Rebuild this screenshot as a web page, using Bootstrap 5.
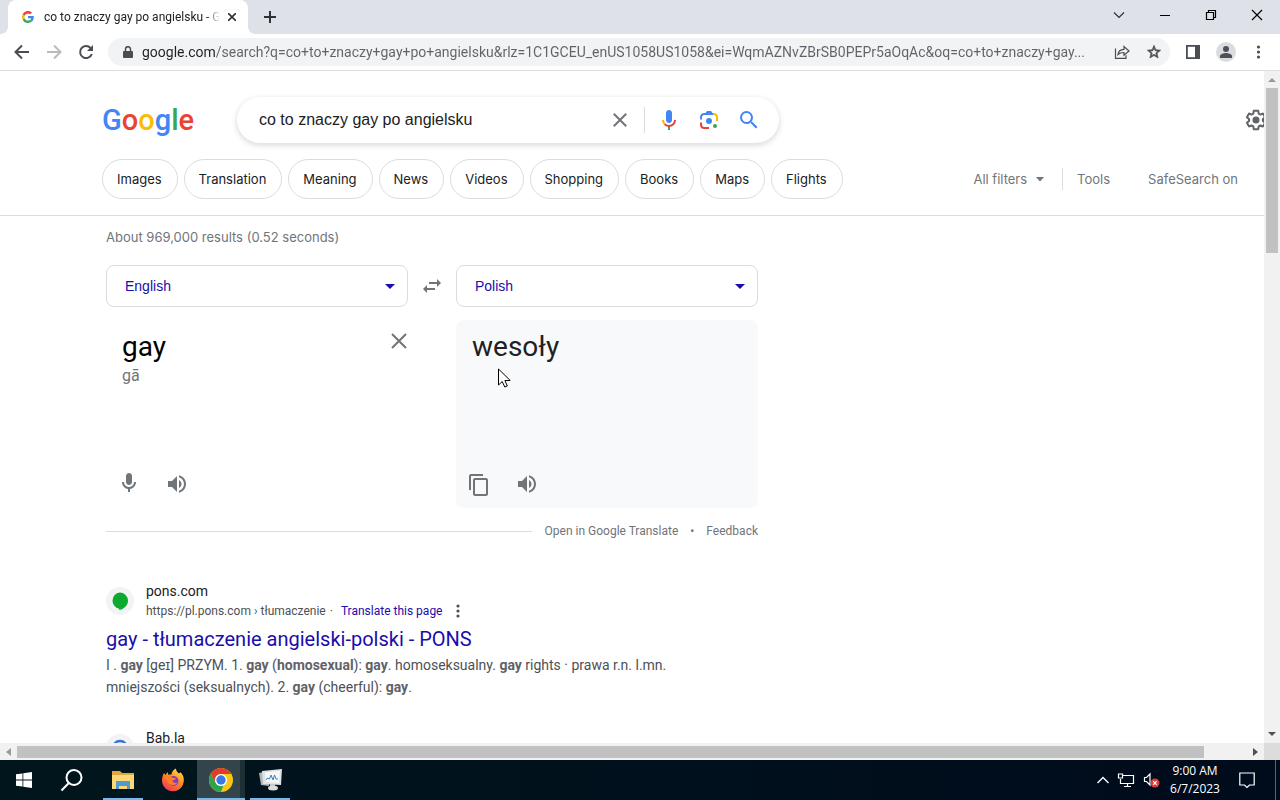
<!DOCTYPE html>
<html lang="en">
<head>
<meta charset="utf-8">
<meta name="viewport" content="width=device-width, initial-scale=1">
<title>co to znaczy gay po angielsku - Google Search</title>
<link href="https://cdn.jsdelivr.net/npm/bootstrap@5.3.0/dist/css/bootstrap.min.css" rel="stylesheet">
<style>
  body { height: 100vh; font-family: Roboto, sans-serif; font-size: 14px; line-height: 20px; color: #202124; background: #fff; }
  svg { display: block; flex: none; }
  a { text-decoration: none; color: #1a0dab; }
  button { border: 0; background: none; padding: 0; color: inherit; }

  /* browser frame */
  .tab-strip { height: 34px; background: #dee1e8; padding-left: 8px; }
  .browser-tab { width: 240px; background: #fff; border-radius: 8px 8px 0 0; padding: 0 12px 0 14px; position: relative; }
  .browser-tab::before, .browser-tab::after { content: ""; position: absolute; bottom: 0; width: 8px; height: 8px; }
  .browser-tab::before { left: -8px; background: radial-gradient(circle at 0 0, transparent 8px, #fff 8px); }
  .browser-tab::after { right: -8px; background: radial-gradient(circle at 100% 0, transparent 8px, #fff 8px); }
  .tab-title { font-size: 12px; margin: 0 8px 0 10px; -webkit-mask-image: linear-gradient(90deg, #000 92%, transparent); mask-image: linear-gradient(90deg, #000 92%, transparent); }
  .window-buttons { gap: 34px; padding-right: 17px; padding-bottom: 4px; }
  .toolbar { height: 37px; border-bottom: 1px solid #dcdde0; padding: 0 16px 0 14px; color: #4a4d51; }
  .nav-buttons { gap: 16px; margin-right: 14px; }
  .omnibox { height: 28px; border-radius: 14px; background: #f1f3f4; padding: 0 8px 0 10px; }
  .omnibox input { border: 0; outline: 0; padding: 0; font-size: 14px; color: transparent; background: linear-gradient(90deg, #202124 73px, #5f6368 73px); -webkit-background-clip: text; background-clip: text; text-overflow: ellipsis; }
  .avatar { width: 20px; height: 20px; background: #dadce0; }

  /* search header */
  .search-header { border-bottom: 1px solid #dadce0; padding-top: 26px; padding-bottom: 16px; }
  .header-row { padding-left: 102px; }
  .logo { font-size: 29px; line-height: 46px; font-weight: 500; width: 135px; }
  .c-blue { color: #4285f4; } .c-red { color: #ea4335; } .c-yellow { color: #fbbc05; } .c-green { color: #34a853; }
  .search-box { width: 542px; height: 46px; border-radius: 23px; box-shadow: 0 2px 5px 1px rgba(64,60,67,.16); padding: 0 18px 0 22px; }
  .search-box input { border: 0; outline: 0; padding: 0; font: 16px "Liberation Sans", sans-serif; color: #202124; }
  .search-box .rule { width: 1px; height: 26px; background: #dadce0; margin: 0 12px 0 12px; }
  .settings { margin-right: -4px; color: #5f6368; }
  .filters { gap: 6px; padding-top: 16px; padding-right: 26px; font-family: Inter, sans-serif; font-size: 13px; }
  .pill { height: 40px; border: 1px solid #dadce0; border-radius: 20px; padding: 0 15px 0 14px; color: #202124; display: flex; align-items: center; }
  .filters button, .filters .safe { color: #70757a; }
  .filters .rule { width: 1px; height: 22px; background: #dadce0; margin-left: 11px; }

  /* results */
  .results { padding: 0 0 0 106px; width: 758px; }
  .stats { font-family: Inter, sans-serif; font-size: 13px; color: #70757a; padding: 11px 0 18px; }
  .lang-select { height: 42px; width: 302px; border: 1px solid #dadce0; border-radius: 8px; padding: 0 18px; font: 14px "Liberation Sans", sans-serif; color: #1a0dab; background: #fff url("data:image/svg+xml,%3Csvg xmlns='http://www.w3.org/2000/svg' viewBox='0 0 10 5'%3E%3Cpath fill='%231a0dab' d='M0 0h10L5 5z'/%3E%3C/svg%3E") no-repeat right 12px center / 10px 5px; }
  .box { width: 302px; height: 188px; padding: 12px 16px; margin-top: 13px; }
  .box-out { background: #f8f9fa; border-radius: 8px; position: relative; }
  .word { font-size: 28px; line-height: 30px; }
  .clear-text { margin-right: -16px; }
  .phonetic { font-size: 16px; line-height: 28px; color: #70757a; }
  .box-actions { gap: 28px; color: #70757a; margin-left: -3px; }
  .cursor { position: absolute; left: 42px; top: 48px; }
  .links { font-size: 12px; line-height: 16px; margin-top: 15px; }
  .links a { color: #70757a; }
  .links .rule { height: 1px; background: #dadce0; margin-right: 13px; }
  .result { margin-top: 42px; }
  .favicon { width: 28px; height: 28px; background: #f1f3f4; border-radius: 50%; margin-right: 12px; }
  .crumb { font-size: 12px; color: #4d5156; }
  .result h3 { font-size: 20px; line-height: 26px; font-weight: 400; margin: 5px 0 2px; }
  .snippet { line-height: 22px; color: #4d5156; margin: 0; white-space: nowrap; }
  .snippet b { font-weight: 700; color: #5f6368; }
  .result-next { margin-top: 30px; }
  .site-next { padding-bottom: 20px; }

  /* scroll bars */
  .bar-v { width: 16px; background: #f1f1f1; }
  .bar-v .thumb { height: 165px; width: 12px; background: #c1c1c1; }
  .bar-h { height: 17px; background: #f1f1f1; flex: none; }
  .bar-h .track { padding-right: 43px; }
  .bar-h .thumb { height: 12px; background: #c1c1c1; }
  .corner { width: 16px; background: #dcdcdc; }
  .arrow-cell { width: 17px; }

  /* desktop task bar */
  .taskbar { height: 40px; background: linear-gradient(90deg, #00161c, #000b1c); color: #fff; flex: none; }
  .task { width: 48px; height: 40px; display: flex; align-items: center; justify-content: center; }
  .task-open { width: 40px; border-bottom: 2px solid #76b9ed; margin: 0 5px; padding-top: 2px; }
  .task-files { margin: 0 6px 0 7px; }
  .task-active { background: #33454b; border-bottom: 2px solid #76b9ed; padding-top: 2px; box-shadow: inset -5px 0 #1d3035; }
  .clock { font: 12px/18px "Open Sans", sans-serif; text-align: center; width: 60px; }
  .notify { margin: 0 20px 0 14px; }
  .show-desktop { width: 5px; border-left: 1px solid #59636c; }
</style>
</head>
<body class="d-flex flex-column overflow-hidden">

<header class="flex-shrink-0">
  <div class="tab-strip d-flex">
    <div class="browser-tab d-flex align-items-center">
      <svg width="12" height="12" viewBox="0 0 48 48"><path fill="#EA4335" d="M24 9.500c3.540 0 6.710 1.220 9.210 3.600l6.850-6.850C35.900 2.380 30.470 0 24 0 14.620 0 6.510 5.380 2.560 13.220l7.980 6.190C12.430 13.720 17.740 9.500 24 9.500z"/><path fill="#4285F4" d="M46.980 24.550c0-1.570-.15-3.090-.38-4.550H24v9.020h12.940c-.58 2.960-2.260 5.480-4.780 7.180l7.730 6c4.510-4.180 7.090-10.360 7.090-17.650z"/><path fill="#FBBC05" d="M10.530 28.590a14.500 14.500 0 0 1 0-9.180l-7.980-6.190a24 24 0 0 0 0 21.560z"/><path fill="#34A853" d="M24 48c6.480 0 11.930-2.130 15.890-5.810l-7.730-6c-2.150 1.450-4.920 2.300-8.160 2.300-6.260 0-11.570-4.220-13.470-9.910l-7.980 6.190C6.510 42.620 14.620 48 24 48z"/></svg>
      <div class="tab-title flex-grow-1 overflow-hidden text-nowrap">co to znaczy gay po angielsku - G</div>
      <button aria-label="Close tab"><svg width="8" height="8" viewBox="0 0 8 8" stroke="#303134" stroke-width="1.600"><path d="M0 0l8 8M8 0L0 8"/></svg></button>
    </div>
    <button class="ms-3 d-flex align-items-center" aria-label="New tab"><svg width="12" height="12" viewBox="0 0 12 12" stroke="#303134" stroke-width="2"><path d="M6 0v12M0 6h12"/></svg></button>
    <div class="window-buttons d-flex align-items-center ms-auto">
      <button aria-label="Search tabs"><svg width="12" height="12" viewBox="0 0 12 12" fill="none" stroke="#303134" stroke-width="1.200"><path d="M1 3.500l5 5 5-5"/></svg></button>
      <button aria-label="Minimize"><svg width="12" height="12" viewBox="0 0 12 12" stroke="#000"><path d="M1 6.500h10"/></svg></button>
      <button aria-label="Restore"><svg width="12" height="12" viewBox="0 0 12 12" fill="none" stroke="#000" stroke-width="1.200"><path d="M1.500 3.500h7v7h-7zM3.500 3.500v-2h7v7h-2"/></svg></button>
      <button aria-label="Close"><svg width="12" height="12" viewBox="0 0 12 12" stroke="#000" stroke-width="1.200"><path d="M1 1l10 10M11 1L1 11"/></svg></button>
    </div>
  </div>
  <div class="toolbar d-flex align-items-center">
    <div class="nav-buttons d-flex">
      <button aria-label="Back"><svg width="16" height="16" viewBox="0 0 16 16" fill="none" stroke="currentColor" stroke-width="2"><path d="M15 8H2M8 1.500L1.500 8 8 14.500"/></svg></button>
      <button aria-label="Forward"><svg width="16" height="16" viewBox="0 0 16 16" fill="none" stroke="#b9bbbe" stroke-width="2"><path d="M1 8h13M8 1.500L14.500 8 8 14.500"/></svg></button>
      <button aria-label="Reload"><svg width="16" height="16" viewBox="0 0 16 16" fill="none" stroke="currentColor" stroke-width="2"><path d="M13.800 10A6 6 0 1 1 12.500 4"/><path fill="currentColor" stroke="none" d="M15 1v6H9z"/></svg></button>
    </div>
    <div class="omnibox d-flex align-items-center flex-grow-1 me-3">
      <svg class="ms-1 me-2" width="12" height="13" viewBox="0 0 12 13"><path fill="#4a4d51" d="M2 5h8a1 1 0 0 1 1 1v5a1 1 0 0 1-1 1H2a1 1 0 0 1-1-1V6a1 1 0 0 1 1-1z"/><path fill="none" stroke="#4a4d51" stroke-width="1.500" d="M3.500 6V3.200a2.500 2.500 0 0 1 5 0V6"/></svg>
      <input class="flex-grow-1" type="text" aria-label="Address" value="google.com/search?q=co+to+znaczy+gay+po+angielsku&amp;rlz=1C1GCEU_enUS1058US1058&amp;ei=WqmAZNvZBrSB0PEPr5aOqAc&amp;oq=co+to+znaczy+gay...">
      <button class="ms-3" aria-label="Share"><svg width="16" height="16" viewBox="0 0 16 16" fill="none" stroke="currentColor" stroke-width="1.200"><path d="M1.500 4.500v9.800h10.500v-3M4 10.500c.4-3.500 2.500-5 6-5.200V2.500L15 7l-5 4.200V8.500c-2.800 0-4.500.5-6 2z"/></svg></button>
      <button class="ms-3" aria-label="Bookmark"><svg width="16" height="16" viewBox="0 0 24 24"><path fill="currentColor" d="M22 9.240l-7.190-.62L12 2 9.190 8.630 2 9.240l5.460 4.730L5.820 21 12 17.270 18.180 21l-1.630-7.030L22 9.240zM12 15.400l-3.760 2.270 1-4.280-3.320-2.880 4.380-.38L12 6.100l1.710 4.040 4.380.38-3.320 2.880 1 4.280L12 15.400z" stroke="currentColor"/></svg></button>
    </div>
    <button class="me-3" aria-label="Side panel"><svg width="14" height="14" viewBox="0 0 14 14"><path fill="none" stroke="currentColor" stroke-width="1.800" d="M.9.9h12.200v12.200H.9z"/><path fill="currentColor" d="M9 0h5v14H9z"/></svg></button>
    <button class="avatar rounded-circle d-flex align-items-center justify-content-center" aria-label="Profile"><svg width="14" height="14" viewBox="0 0 14 14" fill="#4a5157"><circle cx="7" cy="4" r="3"/><path d="M1 13v-2c0-2 4-3 6-3s6 1 6 3v2z"/></svg></button>
    <button class="ms-3" aria-label="Menu"><svg width="12" height="14" viewBox="0 0 12 14" fill="currentColor"><circle cx="6.500" cy="2" r="1.600"/><circle cx="6.500" cy="7" r="1.600"/><circle cx="6.500" cy="12" r="1.600"/></svg></button>
  </div>
</header>

<div class="d-flex flex-grow-1 overflow-hidden">
  <main class="flex-grow-1 overflow-hidden">
    <div class="search-header">
      <form class="header-row d-flex align-items-center" onsubmit="return false">
        <a class="logo flex-shrink-0" href="#" aria-label="Google"><span class="c-blue">G</span><span class="c-red">o</span><span class="c-yellow">o</span><span class="c-blue">g</span><span class="c-green">l</span><span class="c-red">e</span></a>
        <div class="search-box d-flex align-items-center">
          <input class="flex-grow-1" type="text" aria-label="Search" value="co to znaczy gay po angielsku">
          <button type="button" aria-label="Clear"><svg width="24" height="24" viewBox="0 0 24 24"><path fill="#70757a" d="M19 6.410L17.590 5 12 10.590 6.410 5 5 6.410 10.590 12 5 17.590 6.410 19 12 13.410 17.590 19 19 17.590 13.410 12z"/></svg></button>
          <span class="rule"></span>
          <button type="button" aria-label="Search by voice"><svg width="24" height="24" viewBox="0 0 24 24"><path fill="#4285f4" d="M12 15c1.660 0 3-1.310 3-2.970V5.010C15 3.350 13.660 2 12 2S9 3.340 9 5.010v7.020C9 13.690 10.340 15 12 15z"/><path fill="#34a853" d="M11 18.080h2V22h-2z"/><path fill="#fbbc05" d="M7.050 16.870C5.780 15.540 5 14.040 5 12h2c0 1.450.56 2.420 1.470 3.380v.32l-1.150 1.180z"/><path fill="#ea4335" d="M12 16.930a4.970 5.250 0 0 1-3.540-1.550l-1.410 1.490C8.310 18.210 10.070 19 12 19c3.870 0 6.990-2.920 6.990-7H17c0 2.920-2.240 4.930-5 4.930z"/></svg></button>
          <button class="ms-3" type="button" aria-label="Search by image"><svg width="24" height="24" viewBox="0 0 192 192"><circle fill="#34a853" cx="144" cy="144" r="16"/><circle fill="#4285f4" cx="96" cy="104" r="24"/><path fill="#ea4335" d="M24 135.200c0 18.110 14.690 32.800 32.800 32.800H96v-16l-40.100-.1c-8.800 0-15.900-8.190-15.900-17.900v-18H24z"/><path fill="#fbbc05" d="M168 72.800c0-18.110-14.690-32.800-32.800-32.800H116l20 16c8.800 0 16 8.290 16 18v30h16z"/><path fill="#4285f4" d="M112 24H80L68 40H56.800C38.690 40 24 54.690 24 72.800V92h16V74c0-9.710 7.200-18 16-18h80z"/></svg></button>
          <button class="ms-3" aria-label="Search"><svg width="24" height="24" viewBox="0 0 24 24"><path fill="#4285f4" d="M15.500 14h-.79l-.28-.27A6.470 6.470 0 0 0 16 9.500 6.500 6.500 0 1 0 9.500 16c1.610 0 3.090-.59 4.230-1.570l.27.28v.79l5 4.990L20.490 19zm-6 0C7.010 14 5 11.990 5 9.500S7.010 5 9.500 5 14 7.010 14 9.500 11.990 14 9.500 14z"/></svg></button>
        </div>
        <button class="settings ms-auto" type="button" aria-label="Settings"><svg width="24" height="24" viewBox="0 0 24 24" fill="currentColor"><path d="M13.850 22.250h-3.700c-.74 0-1.360-.54-1.450-1.270l-.27-1.890c-.27-.14-.53-.29-.79-.46l-1.800.72c-.7.26-1.470-.03-1.810-.65L2.200 15.530c-.35-.66-.2-1.440.36-1.880l1.530-1.190c-.01-.15-.02-.3-.02-.46 0-.15.01-.31.02-.46l-1.520-1.190c-.59-.45-.74-1.260-.37-1.880l1.850-3.190c.34-.62 1.110-.9 1.790-.63l1.810.73c.26-.17.52-.32.78-.46l.27-1.910c.09-.7.71-1.250 1.440-1.250h3.700c.74 0 1.360.54 1.450 1.270l.27 1.890c.27.14.53.29.79.46l1.800-.72c.71-.26 1.480.03 1.820.65l1.840 3.180c.36.66.2 1.440-.36 1.880l-1.520 1.190c.01.15.02.3.02.46s-.01.31-.02.46l1.520 1.190c.56.45.72 1.230.37 1.860l-1.860 3.220c-.34.62-1.110.9-1.800.63l-1.800-.72c-.26.17-.52.32-.78.46l-.27 1.910c-.1.68-.72 1.220-1.460 1.220zm-3.230-2h2.760l.37-2.550.53-.22c.44-.18.88-.44 1.340-.78l.45-.34 2.380.96 1.380-2.400-2.030-1.580.07-.56c.03-.26.06-.51.06-.78s-.03-.53-.06-.78l-.07-.56 2.030-1.580-1.390-2.400-2.390.96-.45-.35c-.42-.32-.87-.58-1.330-.77l-.52-.22-.37-2.550h-2.760l-.37 2.550-.53.21c-.44.19-.88.44-1.340.79l-.45.33-2.380-.95-1.390 2.390 2.030 1.580-.07.56a7 7 0 0 0-.06.79c0 .26.02.53.06.78l.07.56-2.030 1.580 1.380 2.400 2.390-.96.45.35c.43.33.86.58 1.330.77l.53.22z"/><circle cx="12" cy="12" r="3.500"/></svg></button>
      </form>
      <nav class="filters header-row d-flex align-items-center text-nowrap">
        <a class="pill" href="#">Images</a>
        <a class="pill" href="#">Translation</a>
        <a class="pill" href="#">Meaning</a>
        <a class="pill" href="#">News</a>
        <a class="pill" href="#">Videos</a>
        <a class="pill" href="#">Shopping</a>
        <a class="pill" href="#">Books</a>
        <a class="pill" href="#">Maps</a>
        <a class="pill" href="#">Flights</a>
        <button class="ms-auto d-flex align-items-center">All filters <svg class="ms-2" width="10" height="5" viewBox="0 0 10 5"><path fill="#70757a" d="M1 0h8L5 4.500z"/></svg></button>
        <span class="rule"></span>
        <button class="ms-2 me-4">Tools</button>
        <a class="safe ms-2" href="#">SafeSearch on</a>
      </nav>
    </div>

    <div class="results">
      <div class="stats">About 969,000 results (0.52 seconds)</div>
      <div class="d-flex align-items-center justify-content-between">
        <select class="lang-select form-select" aria-label="Source language"><option>English</option></select>
        <button aria-label="Swap languages"><svg width="18" height="14" viewBox="0 0 18 14" fill="#70757a"><path d="M4 6v3h8v2H4v3L0 10zM14 0l4 4-4 4V5H6V3h8z"/></svg></button>
        <select class="lang-select form-select" aria-label="Target language"><option>Polish</option></select>
      </div>
      <div class="d-flex justify-content-between">
        <section class="box d-flex flex-column">
          <div class="d-flex justify-content-between align-items-start">
            <div class="word text-black">gay</div>
            <button class="clear-text" aria-label="Clear text"><svg width="18" height="18" viewBox="0 0 18 18" stroke="#70757a" stroke-width="2"><path d="M2 2l14 14M16 2L2 16"/></svg></button>
          </div>
          <div class="phonetic">gā</div>
          <div class="box-actions d-flex align-items-end mt-auto">
            <button aria-label="Speak"><svg width="20" height="24" viewBox="2 1 20 24" fill="currentColor"><path d="M12 14c1.660 0 3-1.340 3-3V5c0-1.660-1.340-3-3-3S9 3.340 9 5v6c0 1.660 1.340 3 3 3z"/><path d="M17 11c0 2.760-2.240 5-5 5s-5-2.240-5-5H5c0 3.530 2.610 6.430 6 6.920V21h2v-3.080c3.390-.49 6-3.390 6-6.920z"/></svg></button>
            <button aria-label="Listen"><svg width="20" height="22" viewBox="2 2 20 22" fill="currentColor"><path d="M3 9v6h4l5 5V4L7 9zm13.500 3c0-1.770-1.020-3.290-2.500-4.030v8.050c1.480-.73 2.500-2.250 2.500-4.020zM14 3.230v2.060c2.890.86 5 3.540 5 6.710s-2.110 5.850-5 6.710v2.060c4.010-.91 7-4.490 7-8.770s-2.990-7.860-7-8.770z"/></svg></button>
          </div>
        </section>
        <section class="box box-out d-flex flex-column">
          <div class="word">wesoły</div>
          <svg class="cursor" width="13" height="20" viewBox="0 0 13 20"><path fill="#fff" stroke="#000" d="M.5 1v16l3.700-3.500L6.800 19l2.500-1-2.400-5.500h5.300z"/></svg>
          <div class="box-actions d-flex align-items-end mt-auto">
            <button aria-label="Copy"><svg width="20" height="22" viewBox="2 1 20 22" fill="currentColor"><path d="M16 1H4c-1.100 0-2 .9-2 2v14h2V3h12zm3 4H8c-1.100 0-2 .9-2 2v14c0 1.100.9 2 2 2h11c1.100 0 2-.9 2-2V7c0-1.100-.9-2-2-2zm0 16H8V7h11z"/></svg></button>
            <button aria-label="Listen"><svg width="20" height="22" viewBox="2 2 20 22" fill="currentColor"><path d="M3 9v6h4l5 5V4L7 9zm13.500 3c0-1.770-1.020-3.290-2.500-4.030v8.050c1.480-.73 2.500-2.250 2.500-4.020zM14 3.230v2.060c2.890.86 5 3.540 5 6.710s-2.110 5.850-5 6.710v2.060c4.010-.91 7-4.490 7-8.770s-2.990-7.860-7-8.770z"/></svg></button>
          </div>
        </section>
      </div>
      <div class="links d-flex align-items-center">
        <span class="rule flex-grow-1"></span>
        <a href="#">Open in Google Translate</a><span class="px-2 mx-1 text-secondary">•</span><a href="#">Feedback</a>
      </div>

      <article class="result">
        <div class="d-flex align-items-center">
          <span class="favicon d-flex align-items-center justify-content-center"><svg width="18" height="18" viewBox="0 0 18 18"><path fill="#0cab2f" d="M8.700.5A8.200 8.200 0 0 1 17 8.800c0 4-3 6.500-4.500 7.500C11 17.300 9.500 18 8.200 18v-1.300A8.200 8.200 0 0 1 8.700.5z"/></svg></span>
          <div>
            <div>pons.com</div>
            <div class="crumb d-flex align-items-center">https://pl.pons.com › tłumaczenie<span class="mx-1">·</span><a class="ms-1" href="#">Translate this page</a>
              <button class="ms-2 ps-1" aria-label="About this result"><svg width="8" height="14" viewBox="0 0 8 14" fill="#4d5156"><circle cx="4" cy="2" r="1.600"/><circle cx="4" cy="7" r="1.600"/><circle cx="4" cy="12" r="1.600"/></svg></button>
            </div>
          </div>
        </div>
        <h3><a href="#">gay - tłumaczenie angielski-polski - PONS</a></h3>
        <p class="snippet">I . <b>gay</b> [geɪ] PRZYM. 1. <b>gay</b> (<b>homosexual</b>): <b>gay</b>. homoseksualny. <b>gay</b> rights · prawa r.n. l.mn.<br>mniejszości (seksualnych). 2. <b>gay</b> (cheerful): <b>gay</b>.</p>
      </article>
      <article class="result-next">
        <div class="d-flex align-items-center">
          <span class="favicon d-flex align-items-center justify-content-center"><svg width="18" height="18" viewBox="0 0 18 18"><circle cx="9" cy="9" r="7" fill="none" stroke="#3b73d1" stroke-width="2.500"/></svg></span>
          <div class="site-next">Bab.la</div>
        </div>
      </article>
    </div>
  </main>
  <div class="bar-v d-flex flex-column align-items-center flex-shrink-0">
    <svg class="my-1" width="8" height="9" viewBox="0 0 8 9"><path fill="#9a9a9a" d="M0 7l4-4 4 4z"/></svg>
    <div class="thumb"></div>
    <svg class="mt-auto mb-1" width="8" height="9" viewBox="0 0 8 9"><path fill="#505050" d="M0 2h8L4 6z"/></svg>
  </div>
</div>

<div class="bar-h d-flex">
  <div class="arrow-cell d-flex align-items-center justify-content-center"><svg width="5" height="8" viewBox="0 0 5 8"><path fill="#9a9a9a" d="M5 0v8L0 4z"/></svg></div>
  <div class="track flex-grow-1 d-flex align-items-center"><div class="thumb flex-grow-1"></div></div>
  <div class="arrow-cell d-flex align-items-center justify-content-center"><svg width="5" height="8" viewBox="0 0 5 8"><path fill="#505050" d="M0 0v8l5-4z"/></svg></div>
  <div class="corner"></div>
</div>

<footer class="taskbar d-flex align-items-center">
  <button class="task" aria-label="Start"><svg width="16" height="16" viewBox="0 0 16 16" fill="#fff"><path d="M0 2.300L6.500 1.400v6.200H0zM7.300 1.300L16 0v7.600H7.300zM0 8.400h6.500v6.200L0 13.700zM7.300 8.400H16V16l-8.700-1.300z"/></svg></button>
  <button class="task" aria-label="Search"><svg width="24" height="24" viewBox="0 0 24 24" fill="none" stroke="#fff" stroke-width="2"><circle cx="14" cy="9.500" r="7.500"/><path d="M8.800 15L1.500 22.500"/></svg></button>
  <button class="task task-open task-files" aria-label="File Explorer"><svg width="22" height="19" viewBox="0 0 22 19"><path fill="#e0a83a" d="M0 0h8l2 2h12v15H0z"/><path fill="#fbd775" d="M0 4h22v14H0z"/><path fill="#4f9bd0" d="M4 10h14v8h-3v-3H7v3H4z"/></svg></button>
  <button class="task" aria-label="Firefox"><svg width="24" height="24" viewBox="0 0 24 24"><defs><linearGradient id="ff" x1=".8" y1="0" x2=".2" y2="1"><stop offset="0" stop-color="#ffe14a"/><stop offset=".45" stop-color="#ff8a1e"/><stop offset="1" stop-color="#f0315f"/></linearGradient></defs><path fill="url(#ff)" d="M3 5l1.500 2 2-3 1 3c1-.5 2-.6 3-.4C10.500 4 12.500 1.500 15 .5c0 2.500 1.500 3.500 3 5l1.500-1.200c2.500 3 3.500 5 3.300 8.200C22.500 19 18 23.300 12 23.300S1 18.500 1 12.500C1 9.500 1.800 7 3 5z"/><circle cx="12.500" cy="13" r="5" fill="#7b3fc4"/><path fill="#ff7d24" d="M4 9c3-2 6-1 8 1l3 .2c-.5 1.500-2 1.800-3.500 2.300 0 2 2.500 3 5 2-2 3.500-8 3.500-10-.5C5.500 12.500 5 10.500 4 9z"/></svg></button>
  <button class="task task-active" aria-label="Chrome"><svg width="24" height="24" viewBox="0 0 24 24"><circle cx="12" cy="12" r="12" fill="#f9c716"/><path fill="#df3c2f" d="M1.610 6A12 12 0 0 1 22.390 6H12a6 6 0 0 0-5.200 9z"/><path fill="#2da44e" d="M1.610 6l5.190 9a6 6 0 0 0 7.500 2.600L11.900 24A12 12 0 0 1 1.610 6z"/><circle cx="12" cy="12" r="6" fill="#fff"/><circle cx="12" cy="12" r="4.700" fill="#3b78e7"/></svg></button>
  <button class="task task-open" aria-label="Performance Monitor"><svg width="24" height="22" viewBox="0 0 24 22"><path fill="#aeb4b8" d="M1 4l9-2 1 15-8-1z"/><path fill="#dfe3e6" d="M4 2l20-2-1 16-18-1z"/><path fill="#f4f8fb" d="M7 3.500l15-1.500-1 12-13-1z"/><path fill="none" stroke="#3e7fb5" d="M8 11l1.500-2 2 1 1.500-4 2 5 1.500-5 1.500 4h2"/><path fill="#c5c9cc" d="M12 15h5v3h-5z"/><ellipse cx="15" cy="19" rx="5" ry="2.500" fill="#d9dcde"/></svg></button>
  <div class="d-flex align-items-center ms-auto">
    <button aria-label="Hidden icons"><svg width="12" height="8" viewBox="0 0 12 8" fill="none" stroke="#fff" stroke-width="1.400"><path d="M.5 7L6 1.500 11.500 7"/></svg></button>
    <svg class="ms-2" width="18" height="14" viewBox="0 0 18 14" fill="none" stroke="#fff" stroke-width="1.200"><path d="M6 2.500h10.500v8H3.500V6M1.500 1h4v4h-4zM7 13.500h7M10.500 10.500v3"/></svg>
    <svg class="ms-2" width="18" height="16" viewBox="0 0 18 16"><path fill="none" stroke="#fff" stroke-width="1.200" d="M1.500 5.500h2L7 2v11L3.500 9.500h-2z"/><circle cx="12" cy="11" r="4.500" fill="#d93b3b"/><path stroke="#fff" stroke-width="1.200" d="M10.200 9.200l3.600 3.600M13.800 9.200l-3.600 3.600"/></svg>
    <div class="clock ms-1 text-nowrap">9:00 AM<br>6/7/2023</div>
    <button class="notify" aria-label="Notifications"><svg width="16" height="17" viewBox="0 0 16 17" fill="none" stroke="#fff" stroke-width="1.200"><path d="M.8 1h14.400v12H10.500L8 15.500 5.500 13H.8z"/></svg></button>
  </div>
  <span class="show-desktop align-self-stretch"></span>
</footer>
<script src="https://cdn.jsdelivr.net/npm/bootstrap@5.3.0/dist/js/bootstrap.bundle.min.js"></script>
</body>
</html>
